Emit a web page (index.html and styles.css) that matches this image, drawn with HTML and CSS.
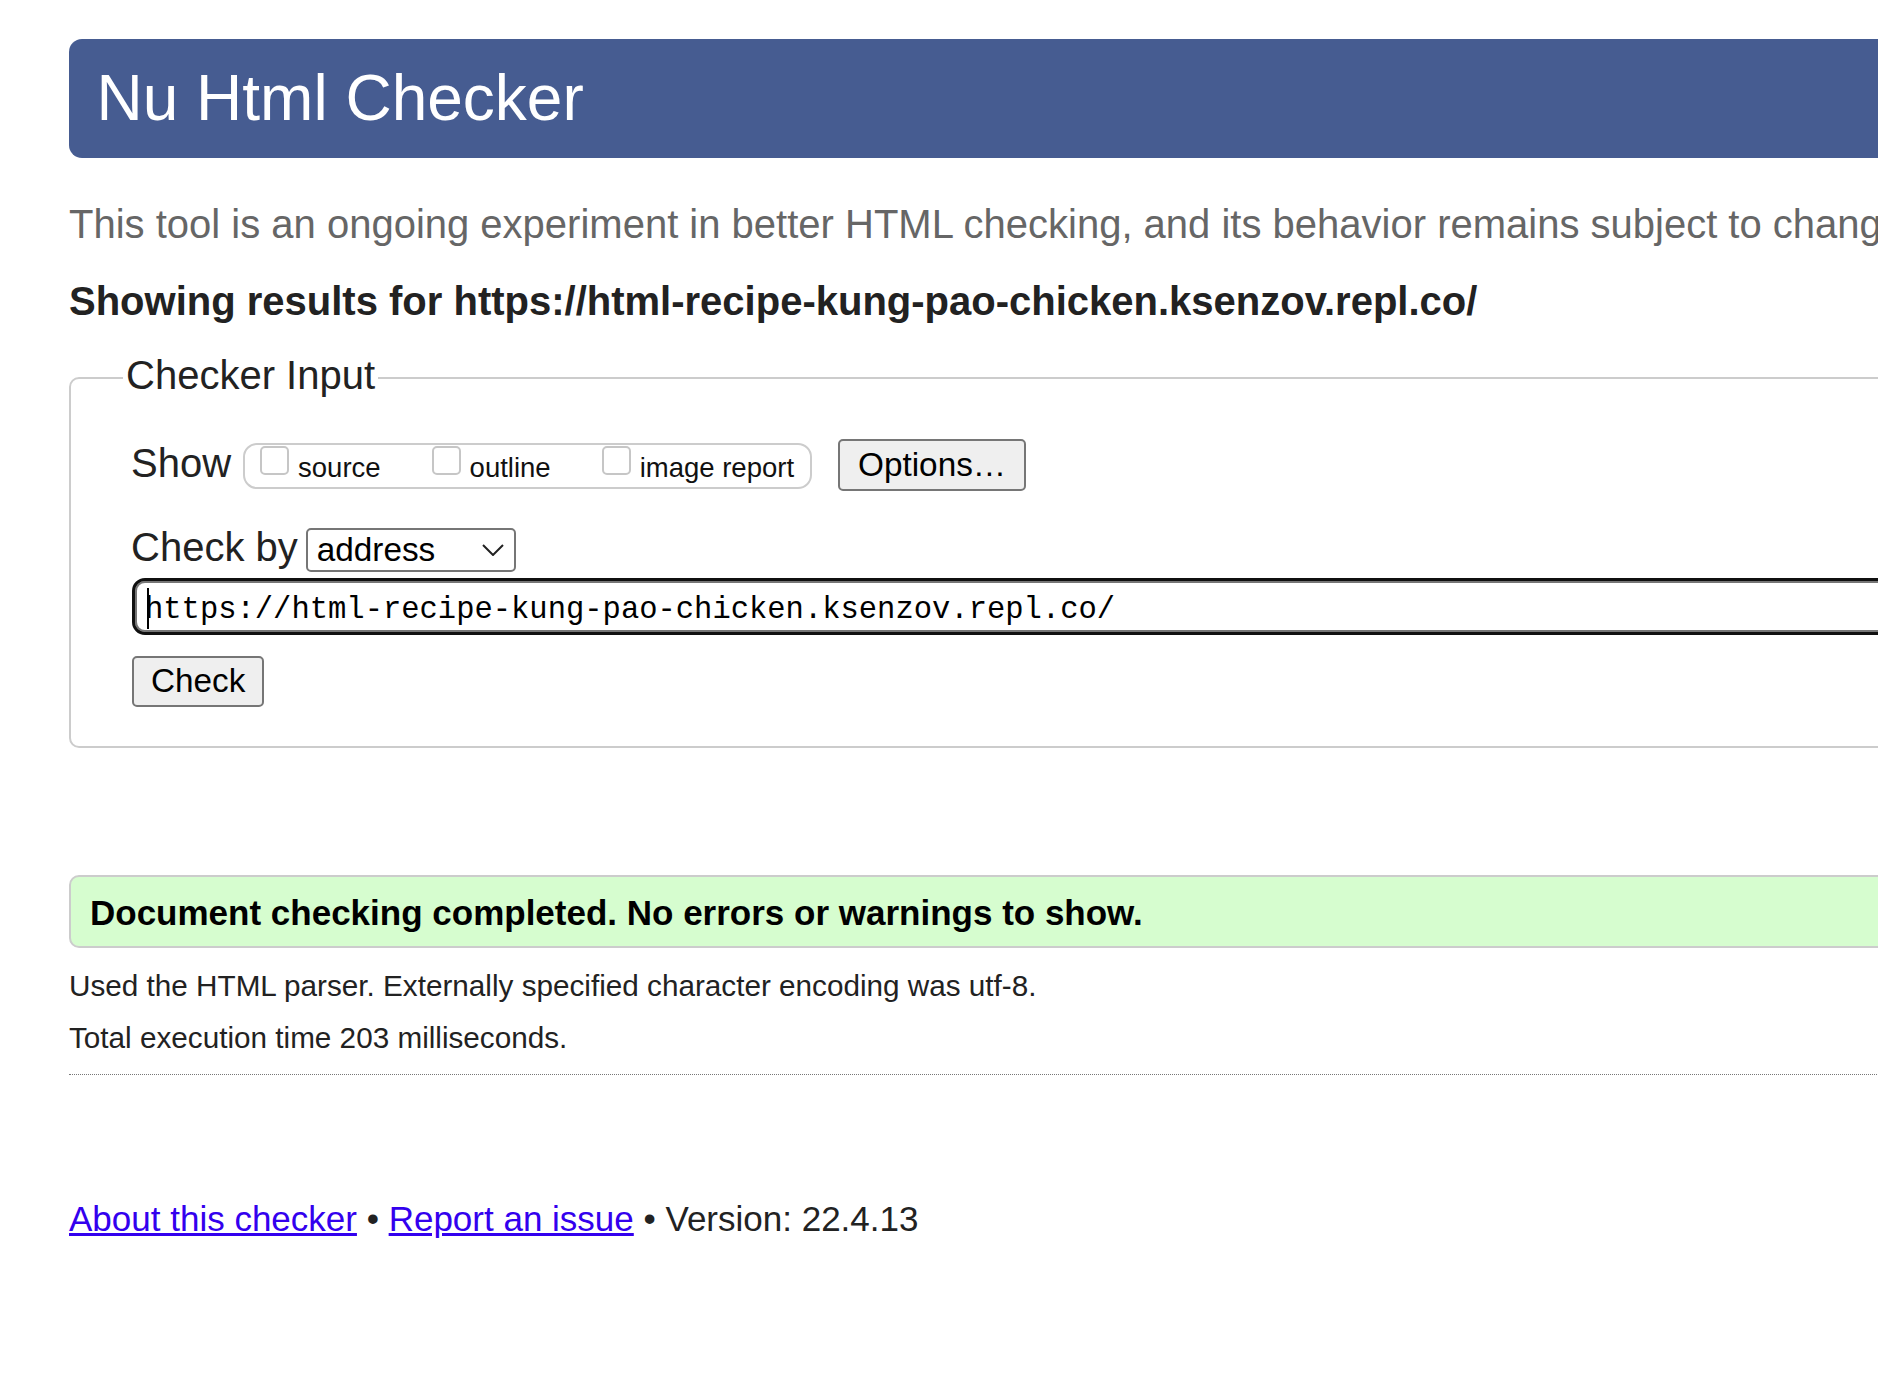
FILE: index.html
```html
<!DOCTYPE html>
<html lang="en">
<head>
<meta charset="utf-8">
<title>Showing results for https://html-recipe-kung-pao-chicken.ksenzov.repl.co/ - Nu Html Checker</title>
<link rel="stylesheet" href="styles.css">
</head>
<body>
<div class="page">
  <h1 class="title">Nu Html Checker</h1>
  <p class="intro">This tool is an ongoing experiment in better HTML checking, and its behavior remains subject to change</p>
  <p class="showing">Showing results for https://html-recipe-kung-pao-chicken.ksenzov.repl.co/</p>
  <form class="checker">
    <fieldset class="checker-input">
      <legend class="legend">Checker Input</legend>
      <div class="show-row">
        <span class="row-label show-label">Show</span>
        <div class="show-group">
          <label class="opt"><input type="checkbox" class="cb"><span class="opt-text">source</span></label>
          <label class="opt"><input type="checkbox" class="cb"><span class="opt-text">outline</span></label>
          <label class="opt"><input type="checkbox" class="cb"><span class="opt-text">image report</span></label>
        </div>
        <button type="button" class="btn options-btn">Options…</button>
      </div>
      <div class="checkby-row">
        <span class="row-label checkby-label">Check by</span>
        <span class="select-wrap">
          <select class="select"><option>address</option></select>
          <svg class="chevron" viewBox="0 0 22 12" aria-hidden="true"><polyline points="1,1 11,11 21,1" fill="none" stroke="#222" stroke-width="2"/></svg>
        </span>
      </div>
      <div class="url-wrap">
        <input class="url" type="url" value="https://html-recipe-kung-pao-chicken.ksenzov.repl.co/">
        <span class="caret"></span>
      </div>
      <div class="submit-row"><button type="button" class="btn check-btn">Check</button></div>
    </fieldset>
  </form>
  <p class="success">Document checking completed. No errors or warnings to show.</p>
  <p class="details">Used the HTML parser. Externally specified character encoding was utf-8.</p>
  <p class="details details-next">Total execution time 203 milliseconds.</p>
  <hr class="separator">
  <p class="footer"><a href="#">About this checker</a> • <a href="#">Report an issue</a> • Version: 22.4.13</p>
</div>
</body>
</html>
```
FILE: styles.css
```css
html, body {
  margin: 0;
  padding: 0;
  overflow: hidden;
  background: #fff;
}
body {
  font-family: "Liberation Sans", Arial, sans-serif;
  color: #222;
}
.page {
  width: 2400px;
  box-sizing: border-box;
  padding: 39px 0 0 69px;
}
.title {
  margin: 0;
  height: 119px;
  line-height: 119px;
  padding: 0 31px 0 27.5px;
  font-size: 64px;
  font-weight: normal;
  color: #fff;
  background: #465c91;
  border-radius: 13px;
}
.intro {
  margin: 42px 0 0;
  font-size: 40px;
  line-height: 48px;
  color: #666;
  white-space: nowrap;
}
.showing {
  margin: 29px 0 0;
  font-size: 40px;
  line-height: 48px;
  font-weight: bold;
  white-space: nowrap;
}
.checker {
  margin: 27px 0 0;
}
.checker-input {
  margin: 0;
  width: 2200px;
  min-width: 0;
  box-sizing: border-box;
  padding: 36px 0 39px 60px;
  border: 2px solid #ccc;
  border-radius: 10px;
}
.legend {
  font-size: 40px;
  line-height: 46px;
  padding: 0 3px 5px;
  margin-left: -8px;
}
.show-row {
  display: flex;
  align-items: flex-start;
}
.row-label {
  font-size: 40px;
  line-height: 46px;
}
.show-label {
  margin-top: 1px;
}
.show-group {
  display: flex;
  align-items: flex-start;
  gap: 51px;
  box-sizing: border-box;
  height: 46px;
  margin: 4px 0 0 12px;
  padding: 7px 16px 0 15px;
  border: 2px solid #ccc;
  border-radius: 14px;
}
.opt {
  display: flex;
  align-items: flex-start;
  gap: 9px;
  font-size: 27.5px;
  line-height: 31px;
  color: #111;
}
.cb {
  -webkit-appearance: none;
  appearance: none;
  flex: none;
  margin: -6px 0 0;
  width: 29px;
  height: 29px;
  box-sizing: border-box;
  border: 2px solid #c6c6c6;
  border-radius: 5px;
  background: #fff;
}
.btn {
  font-family: "Liberation Sans", Arial, sans-serif;
  font-size: 33.3px;
  line-height: 38px;
  color: #000;
  background: #efefef;
  border: 2px solid #767676;
  border-radius: 5px;
  margin: 0;
}
.options-btn {
  padding: 5px 18px;
  margin-left: 26px;
}
.checkby-row {
  display: flex;
  align-items: baseline;
  margin-top: 36px;
}
.checkby-label {
  line-height: 40px;
}
.select-wrap {
  position: relative;
  display: inline-block;
  margin-left: 8px;
}
.select {
  -webkit-appearance: none;
  appearance: none;
  width: 210px;
  height: 44px;
  box-sizing: border-box;
  margin: 0;
  padding: 0 0 0 9px;
  border: 2px solid #767676;
  border-radius: 5px;
  background: #fff;
  font-family: "Liberation Sans", Arial, sans-serif;
  font-size: 33.3px;
  color: #000;
}
.chevron {
  position: absolute;
  left: 176px;
  top: 16px;
  width: 22px;
  height: 12px;
  pointer-events: none;
}
.url-wrap {
  position: relative;
  margin: 9px 0 0 4px;
}
.url {
  display: block;
  width: 2000px;
  height: 51px;
  box-sizing: border-box;
  margin: 0;
  padding: 8px 8px 0;
  border: 2px solid #767676;
  border-radius: 10px;
  outline: 3px solid #101010;
  font-family: "Liberation Mono", monospace;
  font-size: 30.5px;
  color: #000;
  background: #fff;
}
.caret {
  position: absolute;
  left: 12px;
  top: 7px;
  width: 2px;
  height: 41px;
  background: #000;
}
.submit-row {
  display: flex;
  margin-top: 24px;
}
.check-btn {
  padding: 4px 17px 5px;
  margin-left: 1px;
}
.success {
  margin: 127px 0 0;
  width: 2200px;
  box-sizing: border-box;
  padding: 15px 0 13px 19px;
  border: 2px solid #ccc;
  border-radius: 10px;
  background: #d6fdcf;
  font-size: 35px;
  line-height: 41px;
  font-weight: bold;
  color: #000;
}
.details {
  margin: 20px 0 0;
  font-size: 29.7px;
  line-height: 36px;
}
.details-next {
  margin-top: 16px;
}
.separator {
  margin: 18px 0 0;
  width: 2200px;
  height: 0;
  border: 0;
  border-top: 1px dotted #777;
}
.footer {
  margin: 123px 0 0;
  font-size: 35px;
  line-height: 41px;
}
.footer a {
  color: #30e;
}
```
